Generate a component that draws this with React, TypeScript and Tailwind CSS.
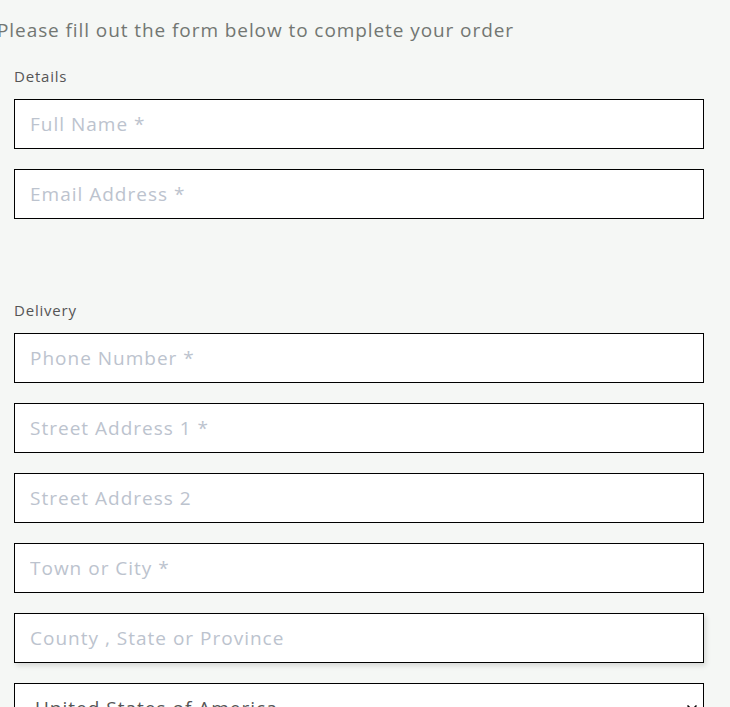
import { ChevronDown } from 'lucide-react'

const fieldClass =
    'block h-[50px] w-[690px] border border-black bg-white px-[15px] text-[19px] tracking-[1px] text-[#555] outline-none placeholder:text-[#bcc3ce]'

const Field = ({ placeholder, shadow }: { placeholder: string; shadow?: boolean }) => (
    <input
        type="text"
        placeholder={placeholder}
        className={fieldClass + (shadow ? ' shadow-[2px_3px_5px_rgba(0,0,0,0.12)]' : '')}
    />
)

const App = () => {
    return (
        <div className="min-h-screen overflow-hidden bg-[#f5f7f5] font-['Open_Sans',sans-serif]">
            <p className="-ml-[3px] flex h-[60px] items-center whitespace-nowrap text-[19px] tracking-[0.92px] text-[#727672]">
                Please fill out the form below to complete your order
            </p>

            <div className="ml-[14px]">
                <div className="flex h-[32px] items-center text-[15px] tracking-[0.8px] text-[#555]">Details</div>
                <div className="mt-[7px] flex flex-col gap-[20px]">
                    <Field placeholder="Full Name *" />
                    <Field placeholder="Email Address *" />
                </div>

                <div className="mt-[75px] flex h-[32px] items-center text-[15px] tracking-[0.8px] text-[#555]">Delivery</div>
                <div className="mt-[7px] flex flex-col gap-[20px]">
                    <Field placeholder="Phone Number *" />
                    <Field placeholder="Street Address 1 *" />
                    <Field placeholder="Street Address 2" />
                    <Field placeholder="Town or City *" />
                    <Field placeholder="County , State or Province" shadow />
                    <div className="relative w-[690px]">
                        <select
                            defaultValue="US"
                            className="block h-[50px] w-full appearance-none border border-black bg-white pl-[20px] pr-[40px] text-[19px] tracking-[1px] text-[#555] outline-none"
                        >
                            <option value="US">United States of America</option>
                            <option value="CA">Canada</option>
                            <option value="GB">United Kingdom</option>
                        </select>
                        <ChevronDown
                            className="pointer-events-none absolute right-[4px] top-[17px] h-[16px] w-[16px] text-black"
                            strokeWidth={2.5}
                        />
                    </div>
                </div>
            </div>
        </div>
    )
}

export default App
